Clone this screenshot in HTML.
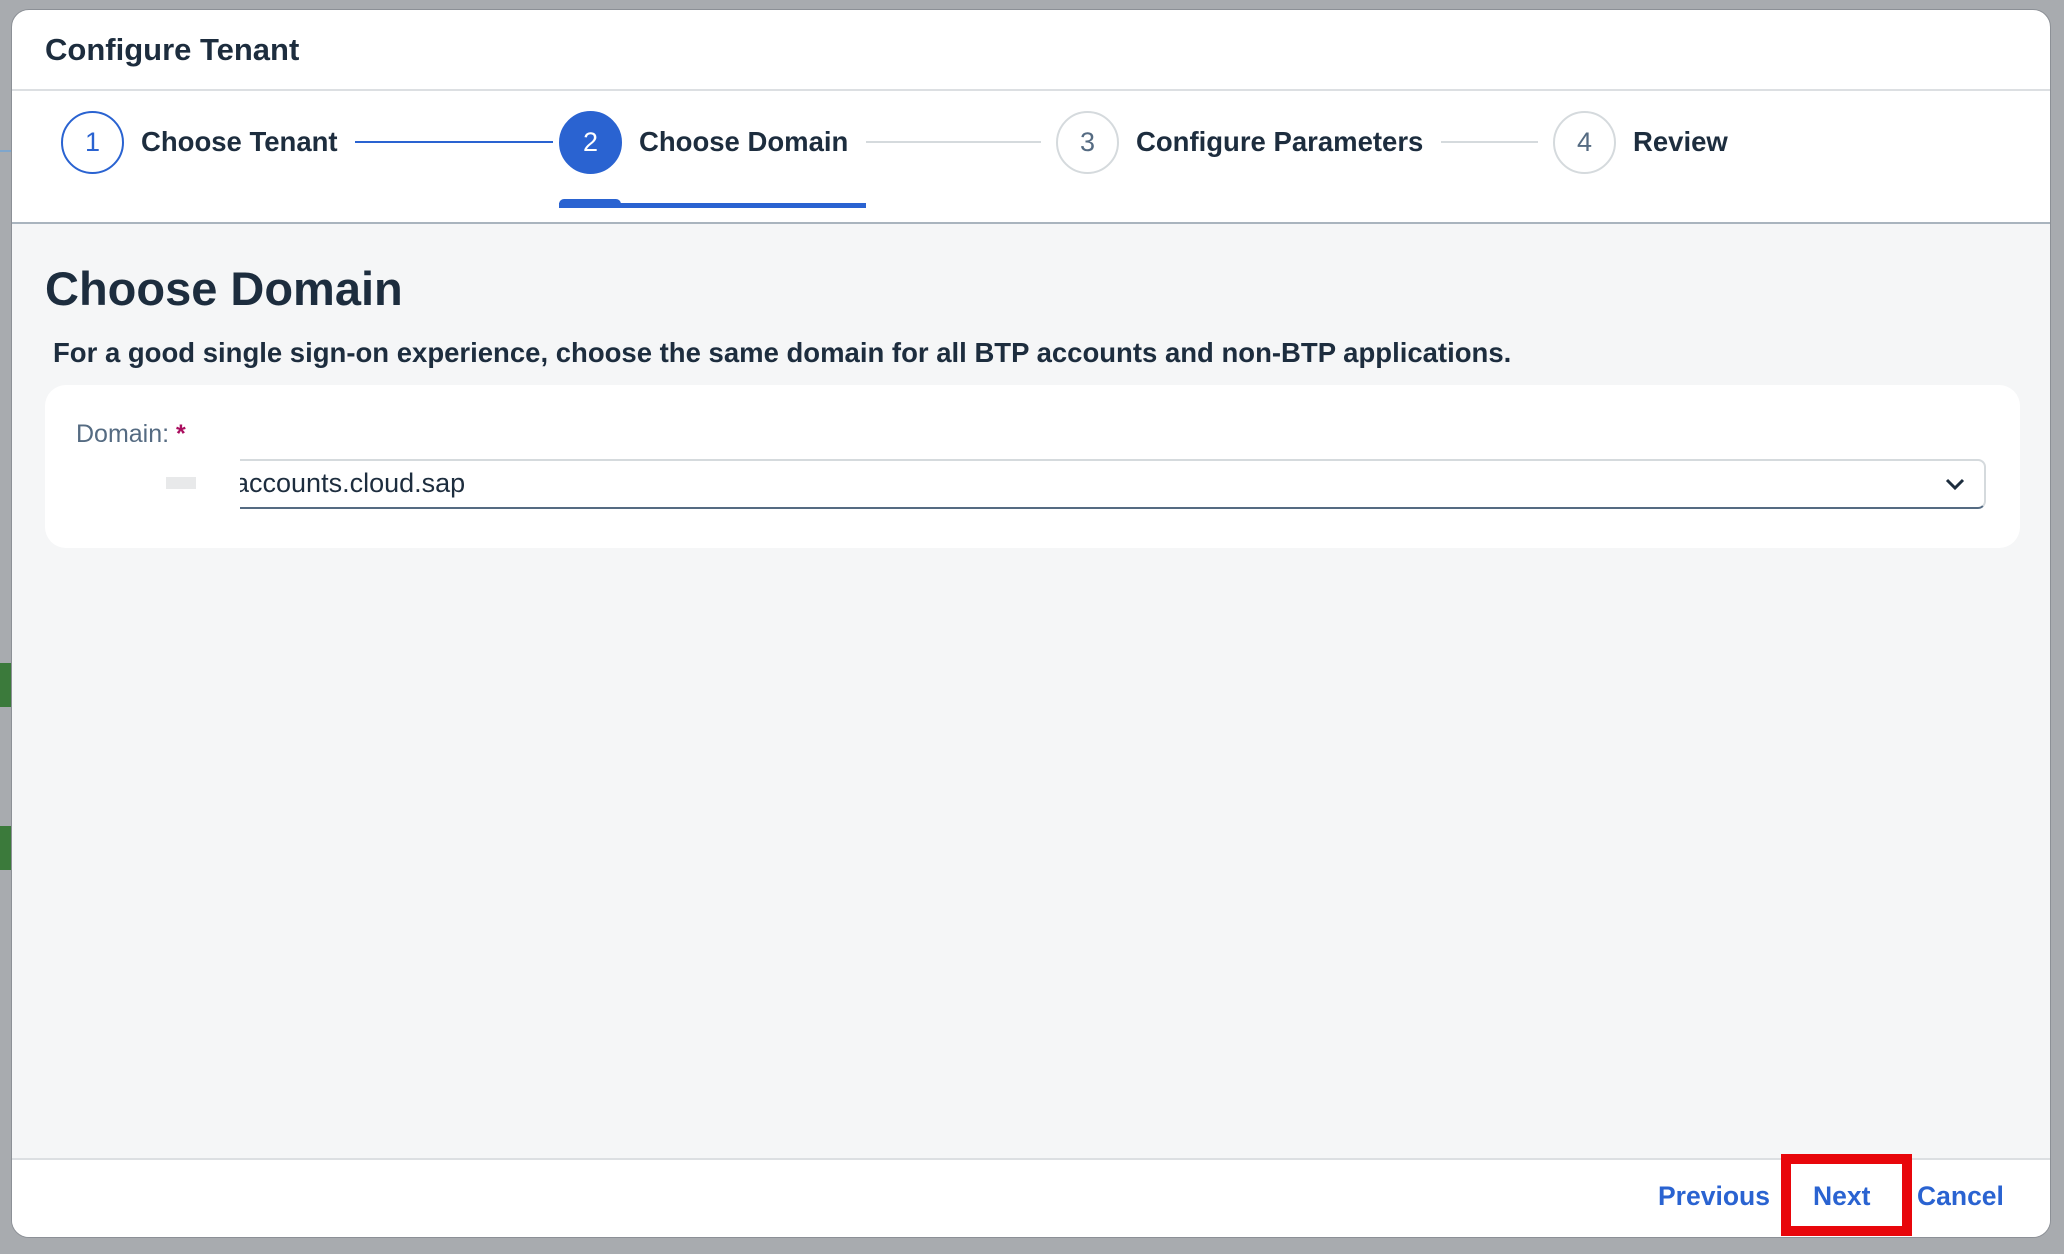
<!DOCTYPE html>
<html><head><meta charset="utf-8"><style>
*{margin:0;padding:0;box-sizing:border-box}
html,body{width:2064px;height:1254px;overflow:hidden}
body{background:#a8abaf;font-family:"Liberation Sans",sans-serif;position:relative;color:#1d2d3e}
.a{position:absolute;white-space:nowrap}
.dlg{position:absolute;left:11px;top:9px;width:2040px;height:1229px;background:#fff;border-radius:18px;overflow:hidden;border:1px solid #8c9096}
.circ{position:absolute;width:63px;height:63px;border-radius:50%;border:2px solid #d5dadd;color:#556b82;font-size:27px;display:flex;align-items:center;justify-content:center;top:101px}
.st{position:absolute;top:112px;font-size:27.5px;font-weight:bold;color:#1d2d3e;line-height:40px}
.ln{position:absolute;top:131px;height:2px;background:#d5dadd}
.btn{position:absolute;top:1166px;font-size:26.5px;font-weight:bold;color:#2a63d1;line-height:40px}
</style></head><body>
<div class="a" style="left:0;top:150px;width:11px;height:2px;background:#7fa6cc"></div>
<div class="a" style="left:0;top:663px;width:11px;height:44px;background:#3b7a3b"></div>
<div class="a" style="left:0;top:826px;width:11px;height:44px;background:#3b7a3b"></div>
<div class="dlg">
<div class="a" style="left:33px;top:20px;font-size:31px;font-weight:bold;line-height:40px">Configure Tenant</div>
<div class="a" style="left:0;top:79px;width:100%;height:2px;background:#dcdfe2"></div>
<div class="circ" style="left:49px;border-color:#2a63d1;color:#2a63d1">1</div>
<div class="st" style="left:129px">Choose Tenant</div>
<div class="ln" style="left:343px;width:198px;background:#2a63d1"></div>
<div class="circ" style="left:547px;background:#2a63d1;border-color:#2a63d1;color:#fff">2</div>
<div class="st" style="left:627px">Choose Domain</div>
<div class="ln" style="left:854px;width:175px"></div>
<div class="circ" style="left:1044px">3</div>
<div class="st" style="left:1124px">Configure Parameters</div>
<div class="ln" style="left:1429px;width:97px"></div>
<div class="circ" style="left:1541px">4</div>
<div class="st" style="left:1621px">Review</div>
<div class="a" style="left:547px;top:193px;width:307px;height:5px;background:#2a63d1"></div>
<div class="a" style="left:547px;top:189px;width:62px;height:9px;background:#2a63d1;border-radius:5px 5px 0 0"></div>
<div class="a" style="left:0;top:212px;width:100%;height:936px;background:#f5f6f7;border-top:2px solid #a9b4be"></div>
<div class="a" style="left:33px;top:249px;font-size:47px;font-weight:bold;line-height:60px">Choose Domain</div>
<div class="a" style="left:41px;top:325px;font-size:27.5px;font-weight:bold;line-height:36px">For a good single sign-on experience, choose the same domain for all BTP accounts and non-BTP applications.</div>
<div class="a" style="left:33px;top:375px;width:1975px;height:163px;background:#fff;border-radius:21px"></div>
<div class="a" style="left:64px;top:407px;font-size:25px;color:#556b82;line-height:34px">Domain:<span style="color:#aa0e5e;font-weight:bold"> *</span></div>
<div class="a" style="left:154px;top:467px;width:30px;height:12px;background:#e8e9ea"></div>
<div class="a" style="left:228px;top:449px;width:1746px;height:50px;border:2px solid #d5dadd;border-left:none;border-bottom:2px solid #556b82;border-radius:0 8px 8px 0;overflow:hidden">
<div class="a" style="left:-6px;top:5px;font-size:27px;line-height:34px;color:#1d2d3e">accounts.cloud.sap</div>
<svg class="a" style="right:18px;top:15px" width="22" height="16" viewBox="0 0 22 16"><path d="M3 4l8 8 8-8" fill="none" stroke="#1d2d3e" stroke-width="3"/></svg>
</div>
<div class="a" style="left:0;top:1148px;width:100%;height:81px;background:#fff;border-top:2px solid #dcdfe2"></div>
<div class="btn" style="left:1646px">Previous</div>
<div class="btn" style="left:1801px">Next</div>
<div class="btn" style="left:1905px">Cancel</div>
<div class="a" style="left:1769px;top:1144px;width:131px;height:82px;border:10px solid #e8060b"></div>
</div>
</body></html>
